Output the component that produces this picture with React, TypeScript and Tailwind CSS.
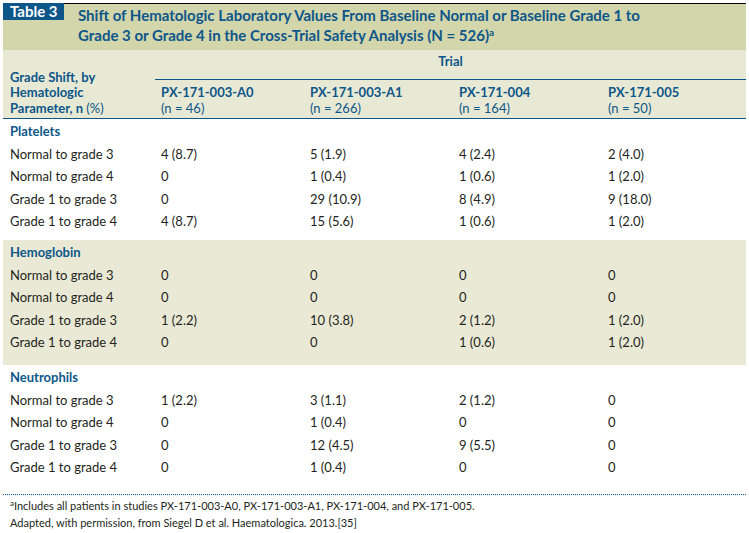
import React from 'react';

type Row = { label: string; values: string[] };
type Section = { name: string; rows: Row[]; shaded: boolean; pad: string };

const trials = [
  { id: 'PX-171-003-A0', n: '(n = 46)' },
  { id: 'PX-171-003-A1', n: '(n = 266)' },
  { id: 'PX-171-004', n: '(n = 164)' },
  { id: 'PX-171-005', n: '(n = 50)' },
];

const sections: Section[] = [
  {
    name: 'Platelets',
    shaded: false,
    pad: 'pb-[7px]',
    rows: [
      { label: 'Normal to grade 3', values: ['4 (8.7)', '5 (1.9)', '4 (2.4)', '2 (4.0)'] },
      { label: 'Normal to grade 4', values: ['0', '1 (0.4)', '1 (0.6)', '1 (2.0)'] },
      { label: 'Grade 1 to grade 3', values: ['0', '29 (10.9)', '8 (4.9)', '9 (18.0)'] },
      { label: 'Grade 1 to grade 4', values: ['4 (8.7)', '15 (5.6)', '1 (0.6)', '1 (2.0)'] },
    ],
  },
  {
    name: 'Hemoglobin',
    shaded: true,
    pad: 'pb-[11px]',
    rows: [
      { label: 'Normal to grade 3', values: ['0', '0', '0', '0'] },
      { label: 'Normal to grade 4', values: ['0', '0', '0', '0'] },
      { label: 'Grade 1 to grade 3', values: ['1 (2.2)', '10 (3.8)', '2 (1.2)', '1 (2.0)'] },
      { label: 'Grade 1 to grade 4', values: ['0', '0', '1 (0.6)', '1 (2.0)'] },
    ],
  },
  {
    name: 'Neutrophils',
    shaded: false,
    pad: 'pb-[15px]',
    rows: [
      { label: 'Normal to grade 3', values: ['1 (2.2)', '3 (1.1)', '2 (1.2)', '0'] },
      { label: 'Normal to grade 4', values: ['0', '1 (0.4)', '0', '0'] },
      { label: 'Grade 1 to grade 3', values: ['0', '12 (4.5)', '9 (5.5)', '0'] },
      { label: 'Grade 1 to grade 4', values: ['0', '1 (0.4)', '0', '0'] },
    ],
  },
];

const cols = 'grid grid-cols-[152px_149px_149px_149px_1fr]';

const App = () => {
  return (
    <div className="w-[749px] h-[533px] bg-white pt-[3px] font-['Lato',sans-serif] text-[#231f20]">
      <div className="mx-[3px]">
        {/* Title band */}
        <div className="h-[47px] bg-[#d3d5ab] border-t border-black flex items-start">
          <div className="w-[61px] h-[17px] -mt-px bg-[#0d5689] text-white font-bold text-[15px] leading-[17px] pl-[7px]">
            Table 3
          </div>
          <div className="ml-[14px] text-[#0d5689] font-bold text-[15px] leading-[20px] pt-[1px]">
            Shift of Hematologic Laboratory Values From Baseline Normal or Baseline Grade 1 to
            <br />
            Grade 3 or Grade 4 in the Cross-Trial Safety Analysis (N = 526)
            <sup className="text-[10px] font-bold">a</sup>
          </div>
        </div>

        {/* Column headings */}
        <div className="bg-[#e8e9d4] flex border-b border-[#0d5689] text-[#0d5689] font-bold text-[13px]">
          <div className="w-[152px] pl-[7px] pb-[2px] flex flex-col justify-end leading-[15.5px]">
            <div>Grade Shift, by</div>
            <div>Hematologic</div>
            <div>
              Parameter, n <span className="font-normal">(%)</span>
            </div>
          </div>
          <div className="flex-1">
            <div className="h-[30px] border-b border-[#0d5689] flex items-center justify-center pb-[6px]">Trial</div>
            <div className="grid grid-cols-[149px_149px_149px_1fr] pt-[4px] pb-[2px] leading-[16px]">
              {trials.map((t) => (
                <div key={t.id} className="pl-[6px]">
                  <div>{t.id}</div>
                  <div className="font-normal">{t.n}</div>
                </div>
              ))}
            </div>
          </div>
        </div>

        {/* Body */}
        {sections.map((s) => (
          <div key={s.name} className={`${s.shaded ? 'bg-[#e9e9d6]' : 'bg-white'} pt-[2px] ${s.pad}`}>
            <div className="h-[22px] pl-[7px] flex items-center text-[#0d5689] font-bold text-[13px]">{s.name}</div>
            {s.rows.map((r) => (
              <div key={r.label} className={`${cols} h-[22.5px] items-center text-[13px]`}>
                <div className="pl-[7px]">{r.label}</div>
                {r.values.map((v, i) => (
                  <div key={i} className="pl-[6px]">
                    {v}
                  </div>
                ))}
              </div>
            ))}
          </div>
        ))}

        {/* Footnotes */}
        <div className="border-t border-dotted border-[#0d5689] pt-[2px] pl-[7px] text-[11px] leading-[17px]">
          <div>
            <sup className="text-[8px]">a</sup>Includes all patients in studies PX-171-003-A0, PX-171-003-A1, PX-171-004, and PX-171-005.
          </div>
          <div>Adapted, with permission, from Siegel D et al. Haematologica. 2013.[35]</div>
        </div>
      </div>
    </div>
  );
};

export default App;
